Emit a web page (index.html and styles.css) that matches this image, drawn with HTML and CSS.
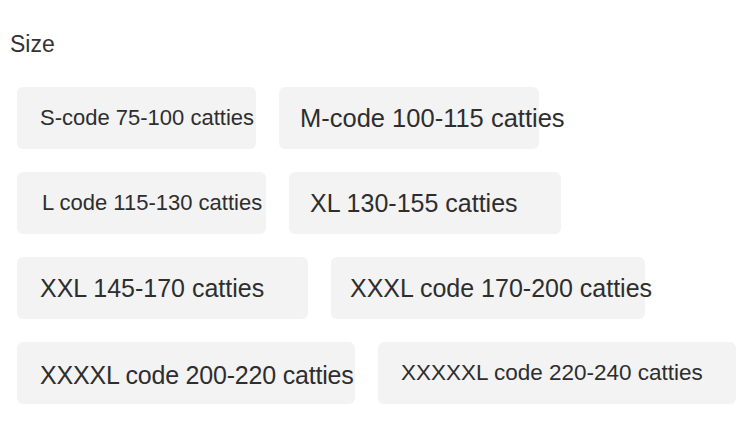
FILE: index.html
```html
<!DOCTYPE html>
<html>
<head>
<meta charset="utf-8">
<link rel="stylesheet" href="styles.css">
</head>
<body>
<div class="page">
  <div class="title">Size</div>
  <div class="options">
    <div class="row">
      <div class="chip w1 sm">S-code 75-100 catties</div>
      <div class="chip w2 xl pl21">M-code 100-115 catties</div>
    </div>
    <div class="row">
      <div class="chip w3 sm pl25">L code 115-130 catties</div>
      <div class="chip w4 lg pl21">XL 130-155 catties</div>
    </div>
    <div class="row">
      <div class="chip w5 lg">XXL 145-170 catties</div>
      <div class="chip w6 lg pl19">XXXL code 170-200 catties</div>
    </div>
    <div class="row">
      <div class="chip w7 lg tight low">XXXXL code 200-220 catties</div>
      <div class="chip w8 sm2">XXXXXL code 220-240 catties</div>
    </div>
  </div>
</div>
</body>
</html>
```

FILE: styles.css
```css
html, body {
  margin: 0;
  padding: 0;
  background: #ffffff;
}
body {
  width: 756px;
  height: 422px;
  overflow: hidden;
  font-family: "Liberation Sans", Arial, sans-serif;
  color: #333333;
}
.page {
  padding: 31px 0 0 10px;
}
.title {
  font-size: 23px;
  line-height: 26px;
  color: #333333;
}
.options {
  margin-top: 30px;
  margin-left: 7px;
  display: flex;
  flex-direction: column;
  gap: 23px;
}
.row {
  display: flex;
  gap: 23px;
}
.chip {
  flex: none;
  height: 62px;
  box-sizing: border-box;
  display: flex;
  align-items: center;
  padding-left: 23px;
  background: #f3f3f3;
  border-radius: 6px;
  white-space: nowrap;
  color: #2e2e2e;
  overflow: visible;
}
.sm { font-size: 22px; }
.sm2 { font-size: 22.5px; padding-left: 23px; }
.lg { font-size: 25px; }
.xl { font-size: 25.5px; }
.tight { letter-spacing: -0.2px; }
.low { padding-top: 4px; }
.pl19 { padding-left: 19px; }
.pl21 { padding-left: 21px; }
.pl25 { padding-left: 25px; }
.w1 { width: 239px; }
.w2 { width: 260px; }
.w3 { width: 249px; }
.w4 { width: 272px; }
.w5 { width: 291px; }
.w6 { width: 314px; }
.w7 { width: 338px; }
.w8 { width: 358px; }
```
